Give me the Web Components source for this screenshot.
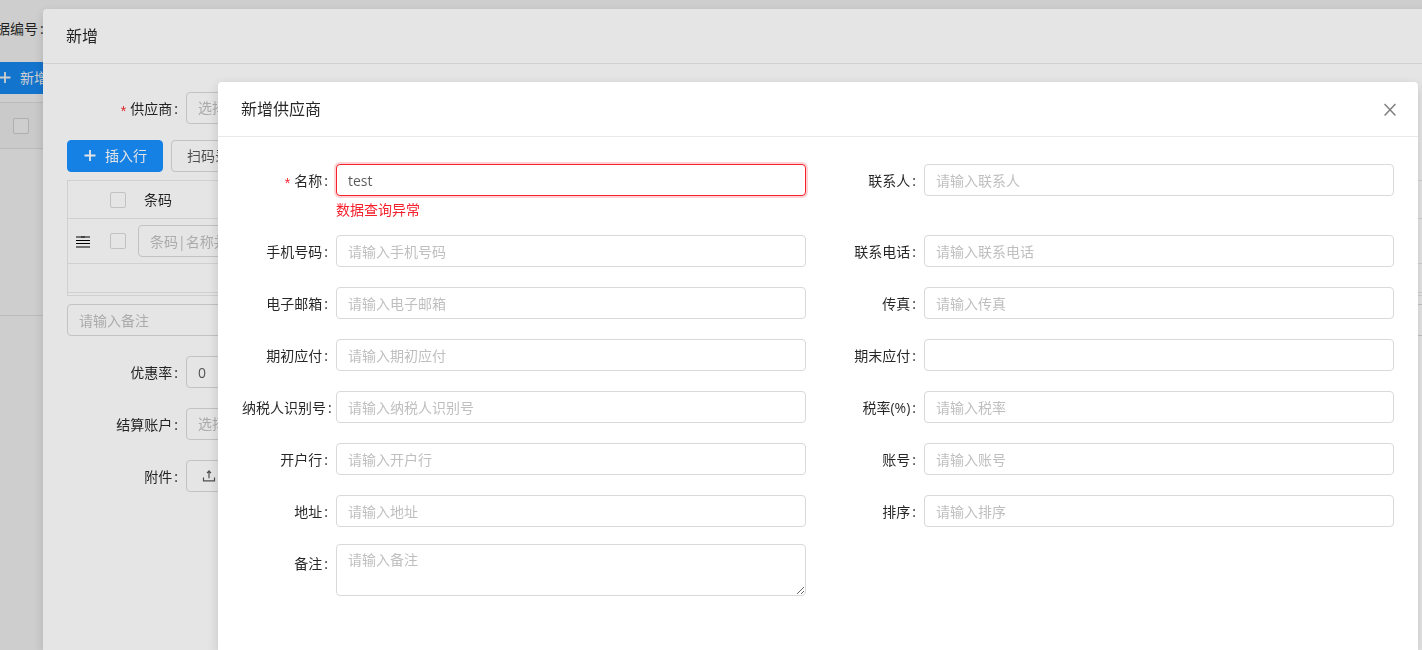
<!DOCTYPE html>
<html lang="zh-CN">
<head>
<meta charset="utf-8">
<meta name="viewport" content="width=device-width, initial-scale=1">
<title>新增供应商</title>
<style>
  html, body { height: 100%; }
  body {
    margin: 0;
    overflow: hidden;
    background: #fff;
    color: rgba(0, 0, 0, .65);
    font: 14px/20px "Open Sans", "Noto Sans CJK SC", sans-serif;
    --heading: rgba(0, 0, 0, .85);
    --primary: #1890ff;
    --error: #f5222d;
    --border: #d9d9d9;
    --split: #e8e8e8;
    --hint: #bfbfbf;
  }
</style>
</head>
<body>
<erp-list-page></erp-list-page>
<erp-modal class="bill" heading="新增">
  <erp-bill-form></erp-bill-form>
</erp-modal>
<erp-modal class="supplier" heading="新增供应商" closable>
  <erp-form-grid>
    <erp-field label="名称" value="test" required error="数据查询异常"></erp-field>
    <erp-field label="联系人" placeholder="请输入联系人"></erp-field>
    <erp-field label="手机号码" placeholder="请输入手机号码"></erp-field>
    <erp-field label="联系电话" placeholder="请输入联系电话"></erp-field>
    <erp-field label="电子邮箱" placeholder="请输入电子邮箱"></erp-field>
    <erp-field label="传真" placeholder="请输入传真"></erp-field>
    <erp-field label="期初应付" placeholder="请输入期初应付"></erp-field>
    <erp-field label="期末应付"></erp-field>
    <erp-field label="纳税人识别号" placeholder="请输入纳税人识别号"></erp-field>
    <erp-field label="税率(%)" placeholder="请输入税率"></erp-field>
    <erp-field label="开户行" placeholder="请输入开户行"></erp-field>
    <erp-field label="账号" placeholder="请输入账号"></erp-field>
    <erp-field label="地址" placeholder="请输入地址"></erp-field>
    <erp-field label="排序" placeholder="请输入排序"></erp-field>
    <erp-field label="备注" placeholder="请输入备注" multiline></erp-field>
  </erp-form-grid>
</erp-modal>

<script>
const controls = `
  *, *::before, *::after { box-sizing: border-box; }
  input, textarea, select, button { margin: 0; font: inherit; color: inherit; }
  .text {
    display: block; width: 100%; height: 32px; padding: 4px 11px;
    border: 1px solid var(--border); border-radius: 4px; background: #fff; outline: none;
  }
  .text::placeholder { color: var(--hint); opacity: 1; }
  select.text { appearance: none; color: var(--hint); }
  .check {
    appearance: none; display: block; width: 16px; height: 16px;
    border: 1px solid var(--border); border-radius: 2px; background: #fff;
  }
`;

function define(name, html, setup) {
  const template = document.createElement('template');
  template.innerHTML = html;
  customElements.define(name, class extends HTMLElement {
    constructor() {
      super();
      this.attachShadow({ mode: 'open' }).append(template.content.cloneNode(true));
    }
    connectedCallback() { if (setup) setup(this, this.shadowRoot); }
  });
}

const icons = {
  plus: '<path d="M7 1v11M1.5 6.5h11" stroke="currentColor" stroke-width="1.8" fill="none"/>',
  close: '<path d="M1.6 2 12.4 13.6M12.4 2 1.6 13.6" stroke="currentColor" stroke-width="1.5" fill="none"/>',
  upload: '<path d="M1.5 8.5v3.4h11V8.5M7 9.3V2M5 4.2 7 2l2 2.2" stroke="currentColor" stroke-width="1.2" fill="none"/>',
  drag: '<path d="M0 3h14M0 13h14" stroke="currentColor" stroke-width="2" opacity=".5" fill="none"/><path d="M0 6.5h14M0 9.5h14" stroke="currentColor" fill="none"/><path d="M5 3h4" stroke="currentColor" stroke-width="2" opacity=".4"/>'
};

define('erp-icon', `
  <style>
    :host { display: inline-flex; flex: none; width: 14px; height: 14px; }
    svg { display: block; width: 100%; height: 100%; overflow: visible; }
  </style>
  <svg viewBox="0 0 14 14" aria-hidden="true"></svg>`,
  (host, root) => { root.querySelector('svg').innerHTML = icons[host.getAttribute('name')]; });

define('erp-button', `
  <style>${controls}
    :host { display: block; }
    button {
      display: flex; align-items: center; gap: 8px; height: 32px; padding: 0 15px;
      border: 1px solid var(--border); border-radius: 4px; background: #fff; white-space: nowrap;
    }
    :host([primary]) button { border-color: var(--primary); background: var(--primary); color: #fff; }
  </style>
  <button type="button"><slot></slot></button>`);

define('erp-label', `<style>
    :host {
      display: flex; justify-content: flex-end; height: 32px; line-height: 34px;
      white-space: nowrap; color: var(--heading);
    }
    :host([required])::before {
      content: "*"; margin-right: 4px; color: var(--error);
      font-family: "Liberation Sans", sans-serif; line-height: 38px;
    }
    :host::after { content: ":"; margin: 0 8px 0 2px; }
  </style><span><slot></slot></span>`);

define('erp-field', `
  <style>${controls}
    :host { display: grid; grid-template-columns: minmax(0, 1fr) minmax(0, 5fr); align-items: start; margin-bottom: 20px; }
    :host([error]) { margin-bottom: 15px; }
    :host([error]) .text { border-color: var(--error); box-shadow: 0 0 0 2px rgba(245, 34, 45, .2); }
    textarea.text { height: 52px; margin-top: -3px; padding-top: 5px; resize: vertical; }
    label { display: grid; grid-template-columns: minmax(min-content, 1fr); }
    .error { margin-top: 4px; color: var(--error); }
    .error[hidden] { display: none; }
  </style>
  <label for="control"><erp-label></erp-label></label>
  <div class="box"><div class="error" id="error" role="alert" hidden></div></div>`,
  (host, root) => {
    const label = root.querySelector('erp-label');
    label.textContent = host.getAttribute('label');
    label.toggleAttribute('required', host.hasAttribute('required'));
    const control = document.createElement(host.hasAttribute('multiline') ? 'textarea' : 'input');
    control.id = 'control';
    control.className = 'text';
    control.placeholder = host.getAttribute('placeholder') || '';
    control.value = host.getAttribute('value') || '';
    root.querySelector('.box').prepend(control);
    if (host.hasAttribute('error')) {
      const error = root.querySelector('.error');
      error.textContent = host.getAttribute('error');
      error.hidden = false;
      control.setAttribute('aria-invalid', 'true');
      control.setAttribute('aria-describedby', 'error');
    }
  });

define('erp-form-grid', `
  <style>
    :host { display: grid; grid-template-columns: repeat(2, minmax(0, 1fr)); column-gap: 24px; padding: 27px 24px; }
  </style>
  <slot></slot>`);

define('erp-modal', `
  <style>${controls}
    :host { position: fixed; inset: 0; background: rgba(0, 0, 0, .1); }
    section {
      position: absolute; inset: var(--top) var(--right) 0 var(--left);
      border-radius: 4px 4px 0 0; background: #fff; box-shadow: 0 4px 12px rgba(0, 0, 0, .15);
    }
    :host(.bill) { --top: 9px; --right: -48px; --left: 43px; }
    :host(.supplier) { --top: 82px; --right: 4px; --left: 218px; }
    header {
      display: flex; align-items: center; justify-content: space-between;
      height: 55px; padding: 0 21px 0 23px; border-bottom: 1px solid var(--split);
    }
    h2 { margin: 0; font-size: 16px; line-height: 22px; font-weight: 400; color: var(--heading); }
    .close { display: flex; padding: 0; border: 0; background: none; color: rgba(0, 0, 0, .5); }
    :host(:not([closable])) .close { display: none; }
  </style>
  <section role="dialog" aria-labelledby="title">
    <header><h2 id="title"></h2><button class="close" type="button" aria-label="关闭"><erp-icon name="close"></erp-icon></button></header>
    <slot></slot>
  </section>`,
  (host, root) => { root.querySelector('h2').textContent = host.getAttribute('heading'); });

define('erp-bill-form', `
  <style>${controls}
    :host { display: block; padding: 28px 24px; }
    .row { display: grid; grid-template-columns: 119px 320px; margin-bottom: 20px; }
    .row.first { margin-bottom: 16px; }
    .actions { display: flex; gap: 8px; margin-bottom: 8px; }
    .sheet { margin-bottom: 8px; padding-bottom: 2px; border: 1px solid var(--split); }
    table { width: 100%; border-collapse: separate; border-spacing: 0; table-layout: fixed; }
    th, td { padding: 0; text-align: left; font-weight: 400; border-bottom: 1px solid var(--split); }
    th { height: 38px; color: var(--heading); }
    td { height: 45px; }
    .empty td { height: 29px; }
    .handle { width: 30px; }
    .pick { width: 40px; }
    .code { width: 240px; }
    .check { margin: 0 auto; }
    th.code { padding-left: 6px; }
    .drag { display: flex; padding: 0 0 0 8px; border: 0; background: none; color: #000; }
    .note { margin-bottom: 20px; }
  </style>
  <div class="row first"><label for="supplier"><erp-label required>供应商</erp-label></label>
    <select class="text" id="supplier"><option>选择供应商</option></select></div>
  <div class="actions">
    <erp-button primary><erp-icon name="plus"></erp-icon>插入行</erp-button>
    <erp-button>扫码录入</erp-button>
  </div>
  <div class="sheet">
    <table>
      <thead><tr><th class="handle"></th><th class="pick"><input class="check" type="checkbox" aria-label="全选"></th><th class="code">条码</th><th></th></tr></thead>
      <tbody>
        <tr><td><button class="drag" type="button" aria-label="拖动排序"><erp-icon name="drag"></erp-icon></button></td>
          <td><input class="check" type="checkbox" aria-label="选择行"></td>
          <td><input class="text" placeholder="条码|名称并回车" aria-label="条码"></td><td></td></tr>
        <tr class="empty"><td colspan="4"></td></tr>
      </tbody>
    </table>
  </div>
  <input class="text note" placeholder="请输入备注" aria-label="备注">
  <div class="row"><label for="rate"><erp-label>优惠率</erp-label></label><input class="text" id="rate" value="0"></div>
  <div class="row"><label for="account"><erp-label>结算账户</erp-label></label>
    <select class="text" id="account"><option>选择结算账户</option></select></div>
  <div class="row"><erp-label>附件</erp-label><erp-button><erp-icon name="upload"></erp-icon>上传</erp-button></div>`);

define('erp-list-page', `
  <style>${controls}
    :host { display: block; margin-left: -18px; padding-top: 12px; }
    .search { display: grid; grid-template-columns: 64px 240px; margin-bottom: 18px; }
    .search erp-label { justify-content: flex-start; }
    .actions { margin-bottom: 8px; }
    table { width: 100%; border-collapse: separate; border-spacing: 0; }
    th, td { padding: 0 31px; border-bottom: 1px solid var(--split); }
    th { height: 47px; border-top: 1px solid var(--split); background: #fafafa; }
    td { height: 167px; }
  </style>
  <div class="search"><label for="number"><erp-label>单据编号</erp-label></label><input class="text" id="number"></div>
  <div class="actions"><erp-button primary><erp-icon name="plus"></erp-icon>新增</erp-button></div>
  <table>
    <thead><tr><th><input class="check" type="checkbox" aria-label="全选"></th></tr></thead>
    <tbody><tr><td></td></tr></tbody>
  </table>`);
</script>
</body>
</html>
